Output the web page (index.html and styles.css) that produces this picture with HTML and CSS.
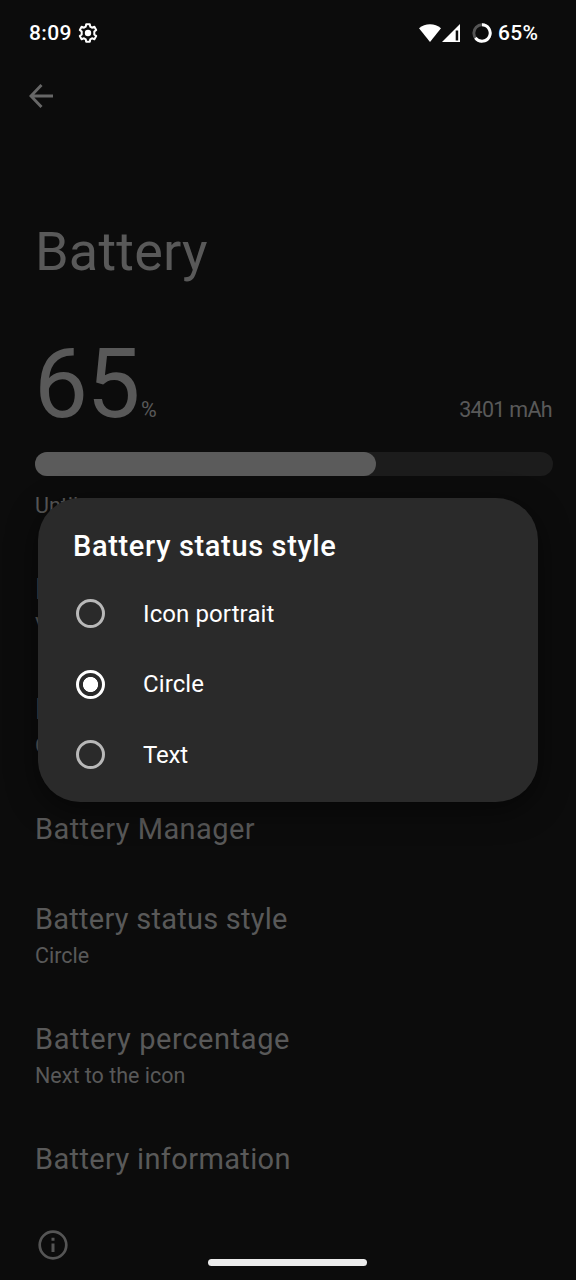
FILE: index.html
```html
<!DOCTYPE html>
<html lang="en">
<head>
<meta charset="utf-8">
<title>Battery</title>
<link rel="stylesheet" href="styles.css">
</head>
<body>
<div class="screen">
  <header class="status-bar">
    <span class="clock">8:09</span>
    <svg class="gear" width="20" height="20" viewBox="0 0 20 20" fill="none" stroke="#fff" stroke-width="2" stroke-linejoin="round"><path d="M8.2 1.2h3.6l.5 2.5 1.7 1 2.4-.9 1.8 3.1-1.9 1.7v2.8l1.9 1.7-1.8 3.1-2.4-.9-1.7 1-.5 2.5H8.200l-.5-2.500-1.700-1-2.400.9-1.800-3.100 1.900-1.700V8.600L1.800 6.900l1.800-3.100 2.400.9 1.700-1z"/><circle cx="10" cy="10" r="3.200" fill="#fff" stroke="none"/></svg>
    <svg class="wifi" width="22" height="18" viewBox="0 0 22 18" fill="#fff"><path d="M0 4.200C6-1.200 16-1.200 22 4.200L11 18z"/></svg>
    <svg class="signal" width="18" height="18" viewBox="0 0 18 18"><path fill="#fff" fill-rule="evenodd" d="M18 0v18H0zM13.700 6.400v10h2.500v-10z"/></svg>
    <svg class="ring" width="20" height="20" viewBox="0 0 20 20" fill="none" stroke-width="2.900"><circle cx="10" cy="10" r="8.200" stroke="#555"/><path stroke="#fff" d="M10 1.800A8.200 8.200 0 1 1 3.370 14.820"/></svg>
    <span class="level">65%</span>
  </header>

  <nav class="toolbar">
    <svg width="24" height="24" viewBox="0 0 24 24" fill="none" stroke="#676767" stroke-width="2.900"><path d="M24 12H2M12.500 1 1.900 12l10.600 11"/></svg>
  </nav>

  <h1 class="page-title">Battery</h1>

  <section class="summary">
    <div class="figures">
      <div><span class="big">65</span><span class="percent">%</span></div>
      <span class="capacity">3401 mAh</span>
    </div>
    <div class="track"><div class="fill"></div></div>
    <p class="estimate">Until</p>
  </section>

  <main class="list">
    <div class="item two"><span class="name">Battery usage</span><span class="note">View usage</span></div>
    <div class="item two"><span class="name">Battery Saver</span><span class="note">Off</span></div>
    <div class="item"><span class="name n-manager">Battery Manager</span></div>
    <div class="item two"><span class="name n-style">Battery status style</span><span class="note">Circle</span></div>
    <div class="item two"><span class="name n-percentage">Battery percentage</span><span class="note">Next to the icon</span></div>
    <div class="item"><span class="name n-information">Battery information</span></div>
  </main>

  <footer class="footer">
    <svg width="30" height="30" viewBox="0 0 30 30" fill="none" stroke="#555" stroke-width="2.700"><circle cx="15" cy="15" r="13.300"/><path stroke-width="3" d="M15 13.400v8.600M15 7.800v3"/></svg>
  </footer>

  <div class="home-bar"></div>

  <div class="dialog">
    <h2 class="dialog-title">Battery status style</h2>
    <div class="option"><span class="radio"></span><span class="label">Icon portrait</span></div>
    <div class="option"><span class="radio checked"></span><span class="label">Circle</span></div>
    <div class="option"><span class="radio"></span><span class="label l-text">Text</span></div>
  </div>
</div>
</body>
</html>
```
FILE: styles.css
```css
* { box-sizing: border-box; margin: 0; padding: 0; }
body { background: #0c0c0c; font-family: Roboto, "Noto Sans", sans-serif; color: #595959; }
svg { display: block; flex: none; }
.screen { position: relative; width: 576px; height: 1280px; overflow: hidden; white-space: nowrap; }

.status-bar { display: flex; align-items: center; height: 66px; padding: 0 37px 0 29px; color: #fff; font-size: 21px; font-weight: 500; }
.clock { width: 43px; letter-spacing: 0.4px; }
.gear { margin-left: 6px; }
.wifi { margin-left: auto; }
.signal { margin-left: 1px; }
.ring { margin-left: 12px; }
.level { width: 41px; margin-left: 6px; letter-spacing: 0.3px; }

.toolbar { height: 60px; padding: 18px 0 0 29px; }
.page-title { height: 206px; padding: 94px 0 0 35px; font-size: 54px; font-weight: 400; line-height: 64px; letter-spacing: 0.2px; }

.summary { height: 227px; padding: 0 23px 0 35px; }
.figures { display: flex; justify-content: space-between; align-items: baseline; height: 120px; line-height: 104px; }
.big { margin-left: -1px; font-size: 96px; letter-spacing: -1.5px; }
.percent, .capacity { font-size: 21.5px; }
.percent { margin-left: 2px; }
.capacity { margin-right: 1px; letter-spacing: -0.7px; }
.track { height: 24px; border-radius: 12px; background: #1c1c1c; }
.fill { width: 341px; height: 24px; border-radius: 12px; background: #5b5b5b; }
.estimate { padding-top: 17px; font-size: 21.500px; line-height: 26px; }

.list { padding-left: 35px; }
.item { display: flex; flex-direction: column; height: 90px; padding-top: 12px; }
.item.two { height: 120px; }
.name { font-size: 29px; line-height: 37px; }
.n-manager { letter-spacing: 0.43px; }
.n-style { letter-spacing: 0.25px; }
.n-percentage { letter-spacing: 0.62px; }
.n-information { letter-spacing: 0.36px; }
.note { margin-top: 5px; font-size: 21.500px; line-height: 26px; }
.footer { padding: 11px 0 0 38px; }

.home-bar { position: absolute; left: 208px; top: 1259px; width: 159px; height: 7px; border-radius: 4px; background: #ececec; }

.dialog { position: absolute; left: 38px; top: 498px; width: 500px; height: 304px; padding: 30px 35px; border-radius: 42px; background: #2a2a2a; color: #fff; box-shadow: 0 8px 30px rgba(0, 0, 0, 0.5); }
.dialog-title { height: 50.800px; font-size: 29px; font-weight: 500; line-height: 36px; letter-spacing: 0.65px; }
.option { display: flex; align-items: center; height: 70.400px; padding-left: 3px; }
.radio { width: 29px; height: 29px; margin-right: 38px; border: 3px solid #b8b8b8; border-radius: 50%; }
.radio.checked { border-color: #fff; background: radial-gradient(circle, #fff 7.200px, transparent 7.900px); }
.label { font-size: 24px; line-height: 30px; letter-spacing: 0.1px; }
.l-text { letter-spacing: -0.2px; }
```
